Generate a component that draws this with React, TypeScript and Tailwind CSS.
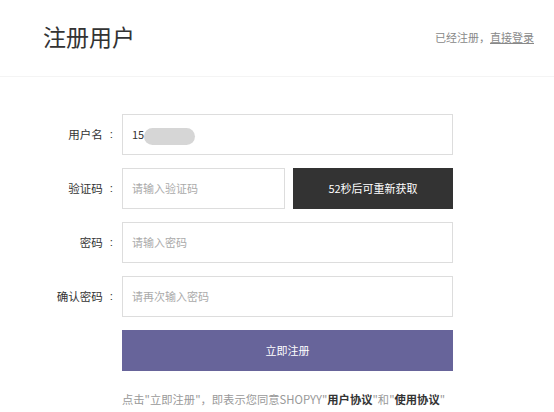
import React from "react";

const font = { fontFamily: '"Noto Sans CJK SC", "Liberation Sans", sans-serif' };

function Label({ children }: { children: React.ReactNode }) {
  return (
    <div className="w-[122px] shrink-0 pr-[9px] text-right text-[11.5px] text-[#333] flex justify-end items-center">
      <span>{children}</span>
      <span className="ml-[7px]" style={{ fontFamily: '"Liberation Sans", sans-serif' }}>:</span>
    </div>
  );
}

export default function App() {
  return (
    <div className="w-[554px] h-[412px] bg-white overflow-hidden" style={font}>
      <div className="h-[77px] border-b border-[#f4f4f4] flex items-center justify-between pl-[43px] pr-[20px] pb-[4px]">
        <div className="text-[23px] leading-none text-[#333]">注册用户</div>
        <div className="text-[11px] text-[#888] pt-[3px] whitespace-nowrap">
          已经注册，<span className="underline">直接登录</span>
        </div>
      </div>
      <div className="pt-[37px] flex flex-col gap-[13px]">
        <div className="flex items-center">
          <Label>用户名</Label>
          <div className="w-[331px] h-[41px] border border-[#ddd] flex items-center pl-[9px] text-[11px] text-[#333] relative">
            <span>15</span>
            <span className="absolute left-[21px] top-[13px] w-[51px] h-[17px] rounded-full bg-[#d6d6d6]"></span>
          </div>
        </div>
        <div className="flex items-center">
          <Label>验证码</Label>
          <div className="w-[163px] h-[41px] border border-[#ddd] flex items-center pl-[9px] text-[11px] text-[#aaa]">
            请输入验证码
          </div>
          <div className="ml-[8px] w-[160px] h-[41px] bg-[#333] flex items-center justify-center text-[11px] text-white">
            52秒后可重新获取
          </div>
        </div>
        <div className="flex items-center">
          <Label>密码</Label>
          <div className="w-[331px] h-[41px] border border-[#ddd] flex items-center pl-[9px] text-[11px] text-[#aaa]">
            请输入密码
          </div>
        </div>
        <div className="flex items-center">
          <Label>确认密码</Label>
          <div className="w-[331px] h-[41px] border border-[#ddd] flex items-center pl-[9px] text-[11px] text-[#aaa]">
            请再次输入密码
          </div>
        </div>
        <div className="flex items-center">
          <div className="w-[122px] shrink-0"></div>
          <div className="w-[331px] h-[41px] bg-[#67649a] flex items-center justify-center text-[11px] text-white">
            立即注册
          </div>
        </div>
        <div className="flex items-center pt-[7px]">
          <div className="w-[122px] shrink-0"></div>
          <div className="text-[11.3px] text-[#999] whitespace-nowrap">
            点击"立即注册"，即表示您同意SHOPYY"<span className="font-bold text-[#333]">用户协议</span>"和"<span className="font-bold text-[#333]">使用协议</span>"
          </div>
        </div>
      </div>
    </div>
  );
}
